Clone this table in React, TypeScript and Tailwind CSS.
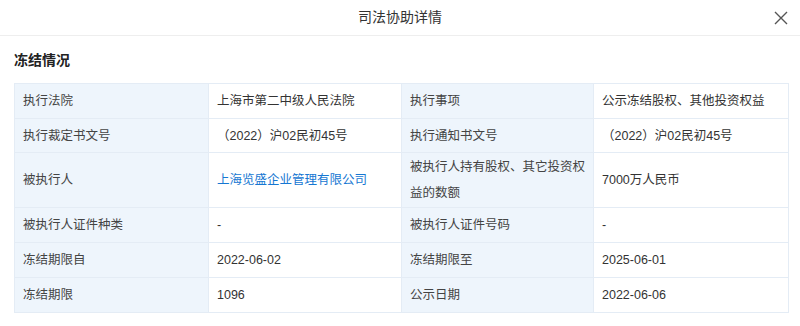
import React from "react";

const rows: { l1: string; v1: React.ReactNode; l2: string; v2: string; h: string }[] = [
  { l1: "执行法院", v1: "上海市第二中级人民法院", l2: "执行事项", v2: "公示冻结股权、其他投资权益", h: "h-[35px]" },
  { l1: "执行裁定书文号", v1: "（2022）沪02民初45号", l2: "执行通知书文号", v2: "（2022）沪02民初45号", h: "h-[34px]" },
  {
    l1: "被执行人",
    v1: <span className="text-[#1677d2]">上海览盛企业管理有限公司</span>,
    l2: "被执行人持有股权、其它投资权益的数额",
    v2: "7000万人民币",
    h: "h-[55px]",
  },
  { l1: "被执行人证件种类", v1: "-", l2: "被执行人证件号码", v2: "-", h: "h-[35px]" },
  { l1: "冻结期限自", v1: "2022-06-02", l2: "冻结期限至", v2: "2025-06-01", h: "h-[35px]" },
  { l1: "冻结期限", v1: "1096", l2: "公示日期", v2: "2022-06-06", h: "h-[35px]" },
];

export default function App() {
  return (
    <div
      className="w-[800px] h-[326px] bg-white text-[#333] overflow-hidden"
      style={{ fontFamily: '"Liberation Sans", "Noto Sans CJK SC", sans-serif' }}
    >
      <div className="relative h-[36px] flex items-center justify-center border-b border-[#eeeeee]">
        <span className="text-[14px] text-[#333]">司法协助详情</span>
        <svg
          className="absolute right-[12px] top-[11px]"
          width="14"
          height="14"
          viewBox="0 0 14 14"
          fill="none"
          stroke="#555"
          strokeWidth="1.4"
        >
          <path d="M1 1L13 13M13 1L1 13" />
        </svg>
      </div>
      <div className="px-[14px]">
        <div className="h-[47px] flex items-center pt-[1px]">
          <span className="text-[14px] font-bold text-[#222]">冻结情况</span>
        </div>
        <table className="w-[774px] border-collapse text-[12.5px] table-fixed">
          <colgroup>
            <col className="w-[194px]" />
            <col className="w-[193px]" />
            <col className="w-[192px]" />
            <col className="w-[195px]" />
          </colgroup>
          <tbody>
            {rows.map((r, i) => (
              <tr key={i} className={r.h}>
                <td className="bg-[#eef5fc] border border-[#e4ecf5] pl-[8px] pr-[6px] text-[#444] leading-[26px]">{r.l1}</td>
                <td className="border border-[#e4ecf5] px-[8px] text-[#333] leading-[26px]">{r.v1}</td>
                <td className="bg-[#eef5fc] border border-[#e4ecf5] pl-[8px] pr-[6px] text-[#444] leading-[26px]">{r.l2}</td>
                <td className="border border-[#e4ecf5] px-[8px] text-[#333] leading-[26px]">{r.v2}</td>
              </tr>
            ))}
          </tbody>
        </table>
      </div>
    </div>
  );
}
